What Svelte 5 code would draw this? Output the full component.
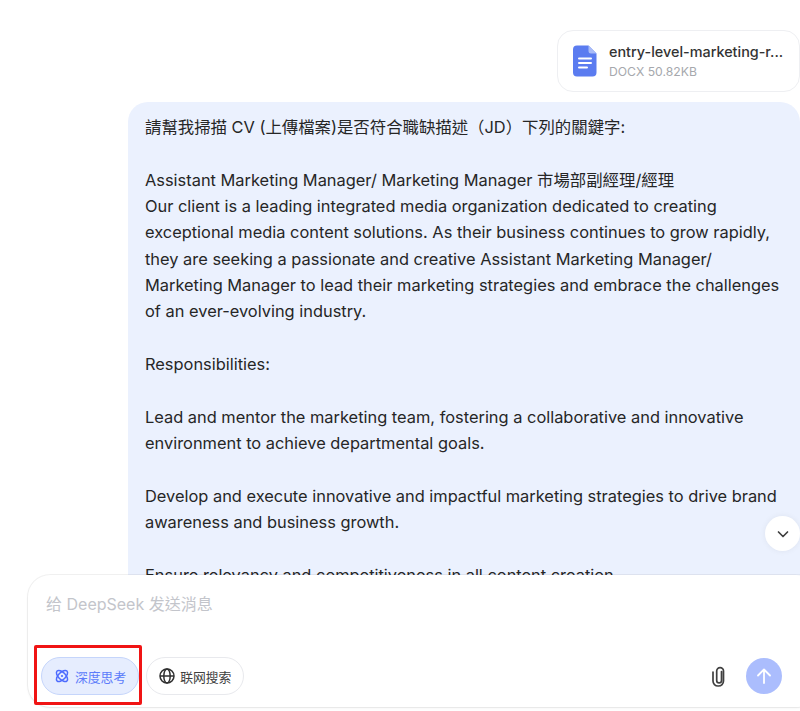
<script>
  const lines = [
    '請幫我掃描 CV (上傳檔案)是否符合職缺描述（JD）下列的關鍵字:',
    '',
    'Assistant Marketing Manager/ Marketing Manager 市場部副經理/經理',
    'Our client is a leading integrated media organization dedicated to creating',
    'exceptional media content solutions. As their business continues to grow rapidly,',
    'they are seeking a passionate and creative Assistant Marketing Manager/',
    'Marketing Manager to lead their marketing strategies and embrace the challenges',
    'of an ever-evolving industry.',
    '',
    'Responsibilities:',
    '',
    'Lead and mentor the marketing team, fostering a collaborative and innovative',
    'environment to achieve departmental goals.',
    '',
    'Develop and execute innovative and impactful marketing strategies to drive brand',
    'awareness and business growth.',
    '',
    'Ensure relevancy and competitiveness in all content creation.'
  ];
</script>

<div class="page">
  <main class="chat">
    <div class="file">
      <svg class="doc" width="24" height="32" viewBox="0 0 24 32" aria-hidden="true">
        <path d="M4 0.5H15.5L23.5 8.5V27.5a4 4 0 0 1-4 4H4a4 4 0 0 1-4-4V4.5a4 4 0 0 1 4-4Z" fill="#5b7cf0"/>
        <path d="M15.5 0.5L23.5 8.5H18a2.5 2.5 0 0 1-2.5-2.5Z" fill="#a9bcf8"/>
        <path d="M6 13.5H18M6 18H18M6 22.5H14" stroke="#fff" stroke-width="2" stroke-linecap="round"/>
      </svg>
      <div class="meta">
        <div class="name">entry-level-marketing-r...</div>
        <div class="size">DOCX 50.82KB</div>
      </div>
    </div>
    <div class="bubble">
      {#each lines as line}
        <div class="line">{line}</div>
      {/each}
    </div>
  </main>

  <button class="down" aria-label="Scroll to bottom">
    <svg width="14" height="14" viewBox="0 0 14 14"><path d="M2.5 5l4.5 4.5L11.5 5" fill="none" stroke="#404040" stroke-width="1.7" stroke-linecap="round" stroke-linejoin="round"/></svg>
  </button>

  <section class="composer">
    <div class="placeholder">给 DeepSeek 发送消息</div>
    <div class="tools">
      <button class="pill active">
        <svg width="16" height="16" viewBox="0 0 16 16" fill="none" stroke="#4d6bfe" stroke-width="1.5">
          <ellipse cx="8" cy="8" rx="7" ry="3.6" transform="rotate(45 8 8)"/>
          <ellipse cx="8" cy="8" rx="7" ry="3.6" transform="rotate(-45 8 8)"/>
          <circle cx="8" cy="8" r="1.1" fill="#4d6bfe" stroke="none"/>
        </svg>
        深度思考
      </button>
      <button class="pill">
        <svg width="16" height="16" viewBox="0 0 16 16" fill="none" stroke="#303030" stroke-width="1.5">
          <circle cx="8" cy="8" r="7"/>
          <ellipse cx="8" cy="8" rx="3.2" ry="7"/>
          <path d="M1 8H15"/>
        </svg>
        联网搜索
      </button>
      <div class="spacer"></div>
      <svg class="clip" width="16" height="21" viewBox="0 0 16 21" fill="none" stroke="#404040" stroke-width="1.7" stroke-linecap="round">
        <path d="M10.5 5.5V14.5a2.4 2.4 0 0 1-4.8 0V5a3.4 3.4 0 0 1 6.8 0v10a5 5 0 0 1-5 5h-.5a5 5 0 0 1-5-5V6"/>
      </svg>
      <button class="send" aria-label="Send">
        <svg width="18" height="18" viewBox="0 0 18 18" fill="none" stroke="#fff" stroke-width="1.8" stroke-linecap="round" stroke-linejoin="round"><path d="M9 16V2.5M3 8.5l6-6 6 6"/></svg>
      </button>
    </div>
  </section>

  <div class="highlight"></div>
</div>

<style>
  :global(body) { margin: 0; background: #fff; }
  .page {
    position: relative;
    width: 800px;
    height: 711px;
    overflow: hidden;
    background: #fff;
    font-family: Inter, "Noto Sans CJK TC", sans-serif;
    color: #262626;
  }
  .chat {
    display: flex;
    flex-direction: column;
    align-items: flex-end;
    gap: 10px;
    padding-top: 30px;
  }
  .file {
    box-sizing: border-box;
    width: 243px;
    height: 62px;
    display: flex;
    align-items: center;
    gap: 12px;
    padding-left: 15px;
    border: 1px solid #eeeff2;
    border-right: 1px solid #eeeff2;
    border-radius: 16px;
    white-space: nowrap;
  }
  .doc { flex: none; }
  .name { font-size: 14.4px; line-height: 20px; font-weight: 500; color: #333; }
  .size { font-size: 12.2px; line-height: 19px; color: #a6a8ad; }
  .bubble {
    box-sizing: border-box;
    width: 672px;
    padding: 12px 0 0 17px;
    background: #ebf1fe;
    border-radius: 20px 20px 0 0;
    font-size: 16.4px;
    line-height: 26.35px;
    white-space: nowrap;
  }
  .line { min-height: 26.35px; }
  .down {
    position: absolute;
    left: 765px;
    top: 516px;
    width: 35px;
    height: 35px;
    padding: 0;
    display: flex;
    align-items: center;
    justify-content: center;
    border: none;
    border-radius: 50%;
    background: #fff;
    box-shadow: 0 0 6px rgba(0, 0, 0, .06);
  }
  .composer {
    position: absolute;
    left: 28px;
    top: 575px;
    box-sizing: border-box;
    width: 790px;
    height: 132px;
    padding: 19px 0 0 18px;
    background: #fff;
    border-radius: 22px;
    box-shadow: 0 0 0 1px rgba(0, 0, 0, .05), 0 1px 3px rgba(0, 0, 0, .06);
  }
  .placeholder { font-size: 16px; line-height: 20px; color: #c3c5cb; }
  .tools {
    display: flex;
    align-items: center;
    gap: 7px;
    margin: 43px 0 0 -5px;
    width: 741px;
  }
  .pill {
    box-sizing: border-box;
    height: 38px;
    display: flex;
    align-items: center;
    gap: 5px;
    padding: 0 12px;
    font: inherit;
    font-size: 12.8px;
    color: #404040;
    background: #fff;
    border: 1px solid #e8e9ed;
    border-radius: 19px;
  }
  .pill.active {
    color: #5c7cfa;
    background: #e6edfe;
    border-color: #c5d5fb;
  }
  .spacer { flex: 1; }
  .clip { margin-right: 12px; }
  .send {
    width: 36px;
    height: 36px;
    padding: 0;
    display: flex;
    align-items: center;
    justify-content: center;
    border: none;
    border-radius: 50%;
    background: #abbdfd;
    flex: none;
  }
  .highlight {
    position: absolute;
    left: 34px;
    top: 645px;
    box-sizing: border-box;
    width: 108px;
    height: 60px;
    border: 3px solid #f01414;
    border-radius: 2px;
    pointer-events: none;
  }
</style>
